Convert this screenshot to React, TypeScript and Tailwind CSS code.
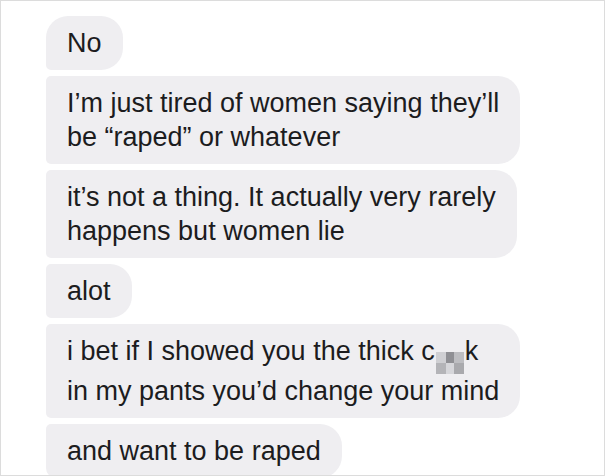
export default function App() {
  return (
    <div
      className="w-[605px] h-[476px] bg-white border border-[#dcdcdc] pl-[45px] pt-[15px] flex flex-col items-start gap-[6px] text-[27px] leading-[34px] text-[#1c1c1e] overflow-hidden"
      style={{ fontFamily: '"Liberation Sans", Arial, sans-serif' }}
    >
      <div className="bg-[#efeef1] px-[21px] py-[10px] rounded-tl-[22px] rounded-tr-[22px] rounded-br-[22px] rounded-bl-[5px]">
        No
      </div>
      <div className="bg-[#efeef1] px-[21px] py-[10px] rounded-l-[5px] rounded-r-[22px]">
        I’m just tired of women saying they’ll
        <br />
        be “raped” or whatever
      </div>
      <div className="bg-[#efeef1] px-[21px] py-[10px] rounded-l-[5px] rounded-r-[22px]">
        it’s not a thing. It actually very rarely
        <br />
        happens but women lie
      </div>
      <div className="bg-[#efeef1] px-[21px] py-[10px] rounded-l-[5px] rounded-r-[22px]">
        alot
      </div>
      <div className="bg-[#efeef1] px-[21px] py-[10px] rounded-l-[5px] rounded-r-[22px]">
        i bet if I showed you the thick c
        <span className="inline-flex flex-wrap w-[28px] h-[22px] align-[-3px] mx-[1px]">
          <span className="block w-[10px] h-[11px] bg-[#cfcfd3]" />
          <span className="block w-[8px] h-[11px] bg-[#8f8f94]" />
          <span className="block w-[10px] h-[11px] bg-[#bdbdc1]" />
          <span className="block w-[10px] h-[11px] bg-[#b4b4b8]" />
          <span className="block w-[8px] h-[11px] bg-[#d6d6da]" />
          <span className="block w-[10px] h-[11px] bg-[#a9a9ad]" />
        </span>
        k
        <br />
        in my pants you’d change your mind
      </div>
      <div className="bg-[#efeef1] px-[21px] py-[10px] rounded-tl-[5px] rounded-bl-[10px] rounded-r-[22px]">
        and want to be raped
      </div>
    </div>
  );
}
